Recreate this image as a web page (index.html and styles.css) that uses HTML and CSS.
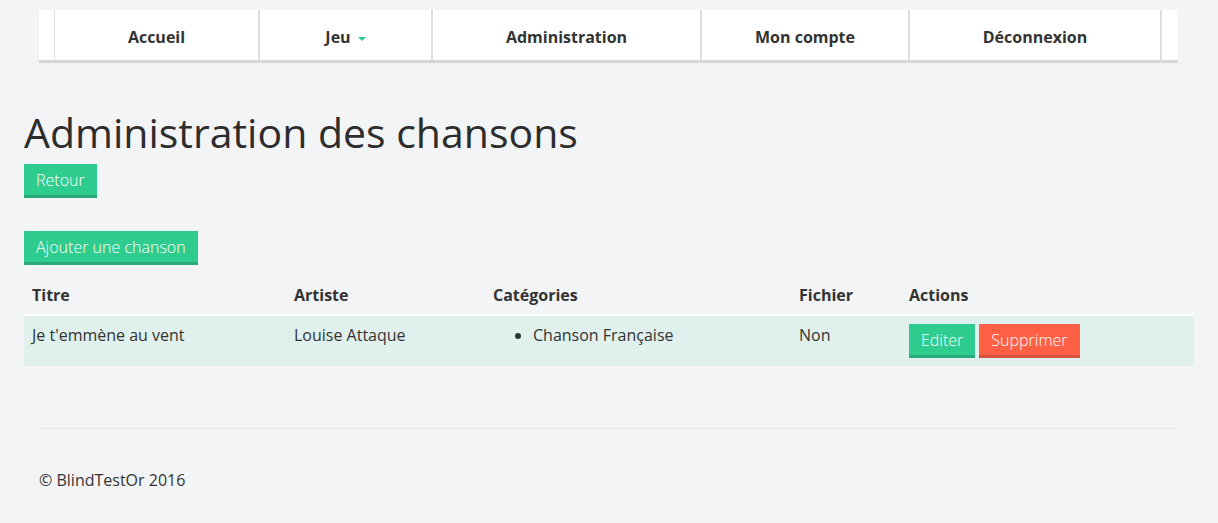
FILE: index.html
```html
<!DOCTYPE html>
<html lang="fr">
<head>
<meta charset="utf-8">
<title>Administration des chansons</title>
<link rel="stylesheet" href="styles.css">
</head>
<body>
<div class="page">
  <nav class="navbar">
    <div class="nav-edge"></div>
    <a class="nav-item w1" href="#">Accueil</a>
    <a class="nav-item w2" href="#">Jeu <span class="caret"></span></a>
    <a class="nav-item w3" href="#">Administration</a>
    <a class="nav-item w4" href="#">Mon compte</a>
    <a class="nav-item w5" href="#">Déconnexion</a>
    <div class="nav-edge last"></div>
  </nav>

  <main class="content">
    <h1 class="title">Administration des chansons</h1>
    <a class="btn btn-green" href="#">Retour</a>
    <div class="spacer"></div>
    <a class="btn btn-green" href="#">Ajouter une chanson</a>

    <table class="songs">
      <thead>
        <tr>
          <th class="c1">Titre</th>
          <th class="c2">Artiste</th>
          <th class="c3">Catégories</th>
          <th class="c4">Fichier</th>
          <th class="c5">Actions</th>
        </tr>
      </thead>
      <tbody>
        <tr>
          <td>Je t'emmène au vent</td>
          <td>Louise Attaque</td>
          <td><ul class="cats"><li>Chanson Française</li></ul></td>
          <td>Non</td>
          <td class="actions"><a class="btn btn-green" href="#">Editer</a><a class="btn btn-red" href="#">Supprimer</a></td>
        </tr>
      </tbody>
    </table>
  </main>

  <footer class="footer">
    <hr class="rule">
    <p class="copy">© BlindTestOr 2016</p>
  </footer>
</div>
</body>
</html>
```

FILE: styles.css
```css
* { box-sizing: border-box; }

html, body {
  margin: 0;
  padding: 0;
  background: #f3f4f6;
}

body {
  font-family: "Open Sans", "DejaVu Sans", sans-serif;
  font-size: 16px;
  line-height: 22px;
  color: #333;
}

.page {
  padding: 10px 24px 0 24px;
}

.navbar {
  display: flex;
  margin: 0 16px 0 15px;
  height: 53px;
  background: #fff;
  border-bottom: 3px solid #d6d6d6;
}

.nav-edge {
  width: 16px;
  border-right: 1px solid #dedede;
}
.nav-edge.last {
  flex: 1;
  border-right: none;
}

.nav-item {
  display: flex;
  align-items: center;
  justify-content: center;
  border-right: 2px solid #dedede;
  font-weight: 700;
  color: #333;
  text-decoration: none;
  padding-top: 4px;
}
.w1 { width: 205px; }
.w2 { width: 173px; }
.w3 { width: 269px; }
.w4 { width: 208px; }
.w5 { width: 252px; }

.caret {
  display: inline-block;
  width: 0;
  height: 0;
  margin-left: 7px;
  margin-top: 3px;
  border-left: 4px solid transparent;
  border-right: 4px solid transparent;
  border-top: 4px solid #2ecc8f;
}

.content {
  padding-top: 47px;
}

.title {
  margin: 0 0 10px 0;
  font-size: 41px;
  line-height: 44px;
  font-weight: 400;
  color: #2d2d2d;
}

.btn {
  display: inline-block;
  height: 34px;
  padding: 5px 12px 0 12px;
  font-weight: 300;
  font-size: 16px;
  line-height: 22px;
  color: #fff;
  text-decoration: none;
}
.btn-green {
  background: #2ecc8f;
  border-bottom: 3px solid #2aa97a;
}
.btn-red {
  background: #ff5f45;
  border-bottom: 3px solid #d8503b;
}

.spacer { height: 33px; }

.songs {
  width: 1170px;
  margin-top: 11px;
  border-collapse: collapse;
}

.songs th {
  text-align: left;
  font-weight: 700;
  padding: 8px 8px;
  border-bottom: 2px solid #fff;
}
.c1 { width: 262px; }
.c2 { width: 199px; }
.c3 { width: 306px; }
.c4 { width: 110px; }

.songs td {
  background: #e0f0ec;
  vertical-align: top;
  padding: 8px 8px;
}

.cats {
  margin: 0;
  padding-left: 40px;
}

.actions .btn + .btn { margin-left: 4px; }

.footer {
  padding: 0 16px 0 15px;
}

.rule {
  margin: 62px 0 0 0;
  border: 0;
  border-top: 1px solid #e6e7e9;
}

.copy {
  margin: 40px 0 0 0;
  line-height: 22px;
}
```
